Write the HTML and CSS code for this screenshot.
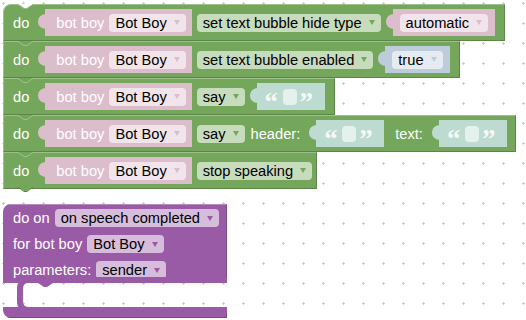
FILE: index.html
```html
<!DOCTYPE html>
<html lang="en">

<head>
    <meta charset="utf-8">
    <title>Bot Boy blocks</title>
    <link rel="stylesheet" href="styles.css">
</head>

<body>
    <div class="workspace">

        <svg class="grid" width="526" height="320">
            <defs>
                <pattern id="dots" width="20" height="20" patternUnits="userSpaceOnUse">
                    <rect x="2" y="3" width="3" height="1" fill="#ccc" />
                    <rect x="3" y="2" width="1" height="3" fill="#ccc" />
                </pattern>
            </defs>
            <rect width="526" height="320" fill="url(#dots)" />
        </svg>

        <div class="stack">

            <div class="stmt first">
                <svg class="notch" width="17" height="6"><polygon points="1,0 7,4 10,4 16,0" fill="#fff" /><polyline points="1,0.5 7,4.5 10,4.5 16,0.5" fill="none" stroke="#9ec18c" /></svg>
                <span class="lbl">do</span>
                <div class="val pink obj after-label">
                    <span class="lbl">bot boy</span>
                    <span class="dd">Bot Boy</span>
                </div>
                <span class="dd after-val">set text bubble hide type</span>
                <div class="val pink plain after-field">
                    <span class="dd">automatic</span>
                </div>
            </div>

            <div class="stmt">
                <svg class="notch" width="17" height="6"><polygon points="1,0 7,4 10,4 16,0" fill="#74a65b" /><polyline points="1,0.5 7,4.5 10,4.5 16,0.5" fill="none" stroke="#9ec18c" /></svg>
                <span class="lbl">do</span>
                <div class="val pink obj after-label">
                    <span class="lbl">bot boy</span>
                    <span class="dd">Bot Boy</span>
                </div>
                <span class="dd after-val">set text bubble enabled</span>
                <div class="val blue plain after-field">
                    <span class="dd">true</span>
                </div>
            </div>

            <div class="stmt">
                <svg class="notch" width="17" height="6"><polygon points="1,0 7,4 10,4 16,0" fill="#74a65b" /><polyline points="1,0.5 7,4.5 10,4.5 16,0.5" fill="none" stroke="#9ec18c" /></svg>
                <span class="lbl">do</span>
                <div class="val pink obj after-label">
                    <span class="lbl">bot boy</span>
                    <span class="dd">Bot Boy</span>
                </div>
                <span class="dd after-val">say</span>
                <div class="val teal txt after-field">
                    <span class="q">“</span><span class="tf"></span><span class="q">”</span>
                </div>
            </div>

            <div class="stmt wide">
                <svg class="notch" width="17" height="6"><polygon points="1,0 7,4 10,4 16,0" fill="#74a65b" /><polyline points="1,0.5 7,4.5 10,4.5 16,0.5" fill="none" stroke="#9ec18c" /></svg>
                <span class="lbl">do</span>
                <div class="val pink obj after-label">
                    <span class="lbl">bot boy</span>
                    <span class="dd">Bot Boy</span>
                </div>
                <span class="dd after-val">say</span>
                <span class="lbl after-dd">header:</span>
                <div class="val teal txt after-label">
                    <span class="q">“</span><span class="tf"></span><span class="q">”</span>
                </div>
                <span class="lbl after-txt">text:</span>
                <div class="val teal txt after-label">
                    <span class="q">“</span><span class="tf"></span><span class="q">”</span>
                </div>
            </div>

            <div class="stmt last">
                <svg class="notch" width="17" height="6"><polygon points="1,0 7,4 10,4 16,0" fill="#74a65b" /><polyline points="1,0.5 7,4.5 10,4.5 16,0.5" fill="none" stroke="#9ec18c" /></svg>
                <span class="lbl">do</span>
                <div class="val pink obj after-label">
                    <span class="lbl">bot boy</span>
                    <span class="dd">Bot Boy</span>
                </div>
                <span class="dd after-val">stop speaking</span>
                <svg class="tab" width="17" height="6"><polygon points="1,0 7,4 10,4 16,0" fill="#74a65b" /><polyline points="1,0 7,4.5 10,4.5 16,0" fill="none" stroke="#5d8549" /></svg>
            </div>

        </div>

        <div class="event">
            <div class="erow top">
                <span class="lbl">do on</span>
                <span class="dd">on speech completed</span>
            </div>
            <div class="erow">
                <span class="lbl">for bot boy</span>
                <span class="dd">Bot Boy</span>
            </div>
            <div class="erow">
                <span class="lbl">parameters:</span>
                <span class="dd">sender</span>
            </div>
            <div class="mouth">
                <svg class="mouth-notch" width="15" height="5"><polygon points="0,0 6,4 9,4 15,0" fill="#9a5ba6" /></svg>
            </div>
            <div class="ebottom"></div>
        </div>

    </div>
</body>

</html>
```

FILE: styles.css
```css
* {
    box-sizing: border-box;
    margin: 0;
    padding: 0;
}

body {
    font-family: "Liberation Sans", Arial, sans-serif;
    font-size: 11pt;
    background: #fff;
}

.workspace {
    position: relative;
    width: 526px;
    height: 320px;
    overflow: hidden;
    padding: 4px 0 0 3px;
}

.grid {
    position: absolute;
    left: 0;
    top: 0;
}

/* green statement stack */

.stack {
    position: relative;
    display: flex;
    flex-direction: column;
    align-items: flex-start;
}

.stmt {
    --arrow: #74a65b;
    position: relative;
    display: flex;
    align-items: center;
    height: 37px;
    padding: 0 9px 0 9px;
    background: #74a65b;
    border-top: 1px solid #9ec18c;
    border-left: 1px solid #9ec18c;
    border-right: 1px solid #5d8549;
    border-bottom: 1px solid #5d8549;
    white-space: nowrap;
}

.stmt.first {
    border-top-left-radius: 8px;
}

.stmt.wide {
    padding-right: 8px;
}

.stmt.last {
    padding-right: 4px;
}

.notch {
    position: absolute;
    left: 13px;
    top: -1px;
}

.tab {
    position: absolute;
    left: 13px;
    bottom: -5px;
}

.lbl {
    color: #fff;
}

.dd {
    display: flex;
    align-items: center;
    height: 18px;
    padding: 0 6px;
    border-radius: 4px;
    background: rgba(255, 255, 255, 0.6);
    color: #000;
}

.dd::after {
    content: "";
    margin-left: 7px;
    border-left: 3.5px solid transparent;
    border-right: 3.5px solid transparent;
    border-top: 5px solid var(--arrow);
}

/* value blocks plugged into the inputs */

.val {
    position: relative;
    display: flex;
    align-items: center;
    height: 27px;
}

.val::before {
    content: "";
    position: absolute;
    left: -7px;
    top: 5px;
    width: 8px;
    height: 15px;
    background: inherit;
    border-radius: 8px 0 0 8px / 7px 0 0 7px;
}

.pink {
    --arrow: #dbbdcc;
    background: #dbbdcc;
}

.blue {
    --arrow: #bdccdb;
    background: #bdccdb;
}

.teal {
    background: #bddbd1;
}

.obj {
    padding: 0 6px 0 11px;
}

.obj .dd {
    margin-left: 5px;
}

.plain {
    padding: 0 7px;
}

.txt {
    padding: 0 13px 0 8px;
}

.q {
    width: 12px;
    height: 16px;
    overflow: visible;
    text-align: center;
    font-family: "Liberation Serif", serif;
    font-weight: bold;
    font-size: 27px;
    line-height: 27px;
    color: rgba(255, 255, 255, 0.85);
}

.tf {
    width: 14px;
    height: 16px;
    margin: 0 3px 0 6px;
    border-radius: 4px;
    background: rgba(255, 255, 255, 0.6);
}

.after-label {
    margin-left: 16px;
}

.after-field {
    margin-left: 12px;
}

.after-val {
    margin-left: 5px;
}

.after-dd {
    margin-left: 6px;
}

.after-txt {
    margin-left: 11px;
}

/* purple event block */

.event {
    --arrow: #9a5ba6;
    position: relative;
    display: flex;
    flex-direction: column;
    width: 224px;
    margin-top: 15px;
    border-radius: 8px 0 0 8px;
    overflow: hidden;
}

.erow {
    display: flex;
    align-items: center;
    gap: 5px;
    height: 26px;
    padding-left: 10px;
    background: #9a5ba6;
    border-right: 1px solid #7b4985;
    white-space: nowrap;
}

.erow.top {
    height: 27px;
    border-top: 1px solid #b88cc1;
}

.mouth {
    position: relative;
    height: 24px;
    margin-left: 20px;
    border-radius: 5px 0 0 5px;
    box-shadow: 0 0 0 6px #9a5ba6;
}

.mouth-notch {
    position: absolute;
    left: 15px;
    top: 0;
}

.ebottom {
    height: 11px;
    background: #9a5ba6;
    border-right: 1px solid #7b4985;
    border-bottom: 1px solid #7b4985;
}
```
